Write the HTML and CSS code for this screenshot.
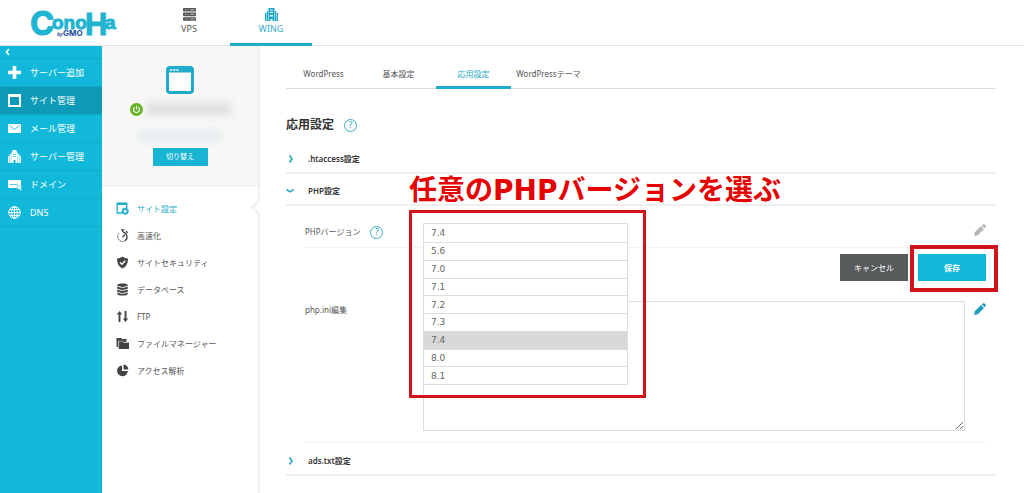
FILE: index.html
```html
<!DOCTYPE html>
<html lang="ja">
<head>
<meta charset="utf-8">
<meta name="viewport" content="width=device-width, initial-scale=1">
<title>ConoHa WING - 応用設定</title>
<link rel="stylesheet" href="styles.css">
</head>
<body>
<header class="header">
  <a class="logo" href="#" aria-label="ConoHa by GMO">
    <svg width="92" height="45" viewBox="0 0 92 45">
      <g class="logo-main">
        <text class="logo-c" x="0" y="35">C</text>
        <text class="logo-s" x="22" y="29">ono</text>
        <text class="logo-h" x="55" y="35">H</text>
        <text class="logo-s" x="75" y="29">a</text>
      </g>
      <text class="logo-by" x="27" y="36">by</text>
      <text class="logo-gmo" x="33" y="36">GMO</text>
    </svg>
  </a>
  <nav class="products">
    <a class="product" href="#">
      <svg width="13" height="13" viewBox="0 0 13 13"><g fill="#555"><rect x="0" y="0" width="13" height="3.6" rx=".8"/><rect x="0" y="4.6" width="13" height="3.6" rx=".8"/><rect x="0" y="9.2" width="13" height="3.6" rx=".8"/></g><path d="M2 1.8h1m1.500 0h1m2 0h4M2 6.400h1m1.500 0h1m2 0h4M2 11h1m1.500 0h1m2 0h4" stroke="#ccc" stroke-width=".9"/></svg>
      <span>VPS</span>
    </a>
    <a class="product is-active" href="#">
      <svg width="13" height="13" viewBox="0 0 13 13"><path fill="#1fa9c9" d="M3.500 0h6v13h-6zM1.800 3h1.200v10H1.800zM10 3h1.200v10H10zM0 5h1.300v8H0zM11.700 5H13v8h-1.300z"/><path d="M5 2.200h3M5 4.400h3" stroke="#fff" stroke-width=".9"/><path d="M5 7h3v1.500H5zM5.500 11h2v2h-2z" fill="#fff"/></svg>
      <span>WING</span>
    </a>
  </nav>
</header>
<div class="layout">
  <nav class="sidebar">
    <button class="collapse" type="button" aria-label="閉じる"><svg width="5" height="8" viewBox="0 0 5 8"><path d="M4 1 1.500 4 4 7" fill="none" stroke="#fff" stroke-width="1.600"/></svg></button>
    <a class="side-item" href="#"><svg width="13" height="13" viewBox="0 0 13 13"><path d="M6.500 0v13M0 6.500h13" stroke="#fff" stroke-width="3.600"/></svg>サーバー追加</a>
    <a class="side-item is-active" href="#"><svg width="13" height="13" viewBox="0 0 13 13"><path d="M1 1h11v11H1z" fill="none" stroke="#fff" stroke-width="2"/><path d="M0 0h13v3H0z" fill="#fff"/></svg>サイト管理</a>
    <a class="side-item" href="#"><svg width="13" height="13" viewBox="0 0 13 13"><rect y="2" width="13" height="9" rx="1" fill="#fff"/><path d="m1.500 3.500 5 4 5-4" fill="none" stroke="#12b8d9" stroke-width=".9"/></svg>メール管理</a>
    <a class="side-item" href="#"><svg width="13" height="13" viewBox="0 0 13 13"><path fill="#fff" d="M3.300 3 5 0h3l1.700 3v10H3.300zM1.600 4h1.300v9H1.600zM10.100 4h1.300v9h-1.300zM0 6h1.200v7H0zM11.800 6H13v7h-1.200z"/><path d="M5 4.500h3M5 6.500h3" stroke="#12b8d9" stroke-width=".7"/><path d="M5.500 10h2v3h-2z" fill="#12b8d9"/></svg>サーバー管理</a>
    <a class="side-item" href="#"><svg class="wide-icon" width="15" height="13" viewBox="0 0 15 13"><rect y="2" width="13" height="8" rx="1" fill="#fff"/><path d="M2 6.500h7" stroke="#12b8d9" stroke-width="1" stroke-dasharray="1.500 .6"/><path d="m9 7 5.500 2-2 1 1.500 2-1.300.8-1.500-2L10 12z" fill="#fff" stroke="#12b8d9" stroke-width=".4"/></svg>ドメイン</a>
    <a class="side-item" href="#"><svg width="13" height="13" viewBox="0 0 13 13"><g fill="none" stroke="#fff" stroke-width="1"><circle cx="6.500" cy="6.500" r="5.800"/><ellipse cx="6.500" cy="6.500" rx="2.800" ry="5.800"/><path d="M6.500.7v11.600M.7 6.500h11.600M1.500 3.600h10M1.500 9.400h10"/></g></svg>DNS</a>
  </nav>
  <aside class="site">
    <div class="summary">
      <svg class="site-icon" width="28" height="28" viewBox="0 0 28 28"><rect x="1.500" y="1.500" width="25" height="25" rx="2.500" fill="#fff" stroke="#1fabca" stroke-width="3"/><path d="M2 2h24v4.500H2z" fill="#1fabca"/><path d="M4 4h2.200m1 0h2.200m1 0h2.200" stroke="#fff" stroke-width="1.600"/></svg>
      <div class="site-name">
        <svg width="13" height="13" viewBox="0 0 13 13"><circle cx="6.500" cy="6.500" r="6.500" fill="#62b31c"/><path d="M4.500 4.300a3 3 0 1 0 4 0M6.500 2.800v3.700" fill="none" stroke="#fff" stroke-width="1.200"/></svg>
        <span class="masked"></span>
      </div>
      <span class="masked masked-link"></span>
      <button class="switch" type="button">切り替え</button>
    </div>
    <nav class="menu">
      <a class="menu-item is-active" href="#"><svg width="13" height="13" viewBox="0 0 13 13"><path d="M6 11H1.200V1.200h9.600V6" fill="none" stroke="#1fabca" stroke-width="1.300"/><path d="M1 1h10v2H1z" fill="#1fabca"/><circle cx="9.200" cy="9.200" r="2.400" fill="#fff" stroke="#1fabca" stroke-width="1.800"/><path d="M9.200 5.500v1M9.200 12v1M5.500 9.200h1M12 9.200h1M6.600 6.600l.7.700M11.200 11.200l.7.700M11.800 6.600l-.7.700M6.600 11.800l.7-.7" stroke="#1fabca"/></svg>サイト設定</a>
      <a class="menu-item" href="#"><svg width="13" height="13" viewBox="0 0 13 13"><g fill="none" stroke="#444"><path d="M3 4.200A4.800 4.800 0 0 0 1.800 8" stroke-dasharray="1 .8"/><path d="M1.800 8A4.800 4.800 0 0 0 9 11.800" stroke-dasharray="1.500 .6"/><path d="M9 11.800A4.800 4.800 0 0 0 7 3.100" stroke-width="1.200"/><path d="M5 .8h3.500M6.700 1v2M10.200 2.300l1.500 1.500" stroke-width="1.300"/><path d="M6.500 8 9 5.500" stroke-width="1.500"/></g></svg>高速化</a>
      <a class="menu-item" href="#"><svg width="13" height="13" viewBox="0 0 13 13"><path d="M6.500.5Q9 2.400 12 2.400 12.200 9.500 6.500 12.500.8 9.500 1 2.400 4 2.400 6.500.5z" fill="#444"/><path d="m4 6.200 2 2L9.300 4.700" fill="none" stroke="#fff" stroke-width="1.300"/></svg>サイトセキュリティ</a>
      <a class="menu-item" href="#"><svg width="13" height="13" viewBox="0 0 13 13"><path d="M1.200 2.300C1.200-.2 11.800-.2 11.800 2.300v8.400c0 2.500-10.600 2.500-10.600 0z" fill="#444"/><path d="M1 3.200q5.500 2.700 11 0M1 6.200q5.500 2.700 11 0M1 9.200q5.500 2.700 11 0" fill="none" stroke="#fff" stroke-width=".9"/></svg>データベース</a>
      <a class="menu-item" href="#"><svg width="13" height="13" viewBox="0 0 13 13"><path d="M3.500 12V3M9.500 1v9" stroke="#444" stroke-width="1.900"/><path d="M.8 4.500 3.500 1l2.700 3.500zM6.800 8.500h5.400L9.500 12z" fill="#444"/></svg>FTP</a>
      <a class="menu-item" href="#"><svg width="13" height="13" viewBox="0 0 13 13"><path d="M.5 1H5l1 1h4.500v3H2.500v5H.5z" fill="#444"/><path d="M2.700 4.500h4l1 1H13V12H2.700z" fill="#444"/><path d="M2.500 9.500V4.200h4.600l1 1h4" fill="none" stroke="#fff" stroke-width=".5"/></svg>ファイルマネージャー</a>
      <a class="menu-item" href="#"><svg width="13" height="13" viewBox="0 0 13 13"><path d="M6 1.500V7h5.800A5.400 5.400 0 1 1 6 1.500z" fill="#444"/><path d="M7.500.5a5 5 0 0 1 4.800 5H7.500z" fill="#444"/></svg>アクセス解析</a>
    </nav>
  </aside>
  <main class="main">
    <nav class="tabs">
      <a class="tab" href="#">WordPress</a>
      <a class="tab" href="#">基本設定</a>
      <a class="tab is-active" href="#">応用設定</a>
      <a class="tab" href="#">WordPressテーマ</a>
    </nav>
    <h1 class="title">応用設定 <button class="help" type="button" aria-label="ヘルプ">?</button></h1>
    <button class="section" type="button"><svg width="8" height="8" viewBox="0 0 8 8"><path d="M3.500.5 6 4 3.500 7.500" fill="none" stroke="#27a8c2" stroke-width="1.600"/></svg>.htaccess設定</button>
    <button class="section" type="button" aria-expanded="true"><svg width="8" height="8" viewBox="0 0 8 8"><path d="M.5 2.500 4 4.800 7.500 2.500" fill="none" stroke="#27a8c2" stroke-width="1.600"/></svg>PHP設定</button>
    <div class="panel">
      <div class="row row-version">
        <div class="label"><label for="version">PHPバージョン</label><button class="help" type="button" aria-label="PHPバージョンのヘルプ">?</button></div>
        <div class="field">
          <p class="callout">任意のPHPバージョンを選ぶ</p>
          <select class="version" id="version"><option>7.4</option></select>
          <ul class="options">
            <li><button type="button">5.6</button></li>
            <li><button type="button">7.0</button></li>
            <li><button type="button">7.1</button></li>
            <li><button type="button">7.2</button></li>
            <li><button type="button">7.3</button></li>
            <li><button type="button" class="is-selected">7.4</button></li>
            <li><button type="button">8.0</button></li>
            <li><button type="button">8.1</button></li>
          </ul>
          <div class="mark mark-list"></div>
        </div>
        <button class="edit is-off" type="button" aria-label="編集"><svg width="12" height="12" viewBox="0 0 12 12"><path d="m0 12 .8-3.800L7 2l3 3-6.200 6.200zM7.700 1.400 9 .4q.8-.6 1.500 0l1.100 1.100q.6.700 0 1.500l-1 1.300z"/></svg></button>
      </div>
      <div class="actions">
        <button class="btn btn-cancel" type="button">キャンセル</button>
        <span class="save-wrap"><button class="btn btn-save" type="button">保存</button><span class="mark mark-save"></span></span>
      </div>
      <div class="row row-ini">
        <div class="label"><label for="ini">php.ini編集</label></div>
        <div class="field"><textarea class="ini" id="ini"></textarea></div>
        <button class="edit" type="button" aria-label="編集"><svg width="12" height="12" viewBox="0 0 12 12"><path d="m0 12 .8-3.800L7 2l3 3-6.200 6.200zM7.700 1.400 9 .4q.8-.6 1.500 0l1.100 1.100q.6.700 0 1.500l-1 1.300z"/></svg></button>
      </div>
    </div>
    <button class="section" type="button"><svg width="8" height="8" viewBox="0 0 8 8"><path d="M3.500.5 6 4 3.500 7.500" fill="none" stroke="#27a8c2" stroke-width="1.600"/></svg>ads.txt設定</button>
  </main>
</div>
</body>
</html>
```
FILE: styles.css
```css
* { box-sizing: border-box; }
body {
  margin: 0;
  min-height: 100vh;
  display: flex;
  flex-direction: column;
  background: #fff;
  color: #555;
  font: 8px/16px "Noto Sans", "Noto Sans CJK JP", sans-serif;
}
a { color: inherit; text-decoration: none; }
button { font: inherit; color: inherit; border: 0; background: none; padding: 0; margin: 0; }
svg { flex: none; display: block; }

.header { display: flex; height: 46px; border-bottom: 1px solid #e4e4e4; }
.logo { width: 148px; padding-left: 30px; }
.logo-main { fill: #1fb4d2; stroke: #1fb4d2; }
.logo-c { font: 700 33px Inter, sans-serif; }
.logo-s { font: 700 19px "Liberation Sans", sans-serif; }
.logo-h { font: 700 31px "Liberation Sans", sans-serif; }
.logo-by { font: italic 700 5px "Liberation Sans", sans-serif; fill: #1c4fa0; }
.logo-gmo { font: 700 8px Inter, sans-serif; fill: #1c4fa0; }
.products { display: flex; font-size: 9px; }
.product {
  width: 82px;
  height: 46px;
  padding-top: 8px;
  display: flex;
  flex-direction: column;
  align-items: center;
  border-bottom: 3px solid transparent;
}
.product.is-active { color: #35a9c6; border-color: #1fabca; }

.layout { flex: 1; display: flex; }
.sidebar { width: 102px; flex: none; background: #12b8d9; color: #fff; font-size: 9px; }
.collapse { display: flex; align-items: center; width: 100%; height: 13px; padding-left: 5px; border-bottom: 1px solid #10abca; }
.side-item { display: flex; align-items: center; gap: 9px; height: 28px; padding-left: 8px; border-bottom: 1px solid #10abca; }
.wide-icon { margin-right: -2px; }
.side-item.is-active { background: #0c9ab7; }

.site { width: 158px; flex: none; border-right: 2px solid #f0f0f0; }
.summary {
  height: 140px;
  padding-top: 20px;
  display: flex;
  flex-direction: column;
  align-items: center;
  background: #f7f7f7;
  border-bottom: 1px solid #ececec;
}
.site-name { display: flex; align-items: center; gap: 4px; height: 30px; }
.masked { width: 84px; height: 12px; background: #ddd; filter: blur(4px); }
.masked-link { height: 8px; margin: 8px 0 8px; background: #dfeaec; }
.switch { width: 55px; height: 18px; background: #18b4d3; color: #fff; font-size: 7px; line-height: 16px; }
.menu { padding: 9px 0 0 14px; position: relative; }
.menu::after {
  content: "";
  position: absolute;
  top: 16px;
  right: -6px;
  width: 9px;
  height: 9px;
  background: #fff;
  border: solid #eee;
  border-width: 0 0 2px 2px;
  transform: rotate(45deg);
}
.menu-item { display: flex; align-items: center; gap: 8px; height: 27px; }
.menu-item.is-active { color: #1fabca; }

.main { flex: 1; min-width: 0; padding: 14px 28px 0 26px; }
.tabs { display: flex; height: 29px; border-bottom: 1px solid #ddd; }
.tab { width: 75px; height: 29px; text-align: center; line-height: 27px; border-bottom: 3px solid transparent; white-space: nowrap; }
.tab.is-active { color: #1fabca; border-color: #1fabca; }
.title { display: flex; align-items: center; gap: 10px; margin: 24px 0 5px; font-size: 12px; line-height: 24px; font-weight: 700; color: #333; }
.help { width: 13px; height: 13px; border: 1px solid #3caecb; border-radius: 50%; color: #2aa7c6; font-weight: 400; font-size: 9px; line-height: 10px; }
.section {
  display: flex;
  align-items: center;
  gap: 14px;
  width: 100%;
  height: 32px;
  padding-top: 4px;
  border-bottom: 2px solid #f0f0f0;
  color: #333;
  font-weight: 600;
}
.panel { padding: 0 10px 0 19px; }
.row { display: flex; align-items: flex-start; border-bottom: 1px dotted #e8e8e8; }
.row-version { height: 42px; padding-top: 17px; }
.row-ini { height: 142px; margin-top: 20px; margin-bottom: 1px; }
.label { width: 118px; flex: none; display: flex; align-items: center; gap: 10px; height: 18px; }
.field { position: relative; flex: 1; min-width: 0; }
.version {
  display: block;
  appearance: none;
  width: 205px;
  height: 20px;
  margin: 0;
  padding: 0 7px;
  border: 1px solid #ddd;
  border-radius: 0;
  background: #fff;
  color: #666;
  font: 9px/18px "DejaVu Sans", sans-serif;
}
.options {
  position: absolute;
  z-index: 2;
  top: 20px;
  left: 0;
  width: 205px;
  height: 142px;
  display: grid;
  grid-auto-rows: 1fr;
  margin: 0;
  padding: 0;
  list-style: none;
  border: solid #ddd;
  border-width: 0 1px;
  background: #fff;
}
.options button {
  display: block;
  width: 100%;
  height: 100%;
  padding: 0 7px;
  border-bottom: 1px solid #ddd;
  text-align: left;
  color: #666;
  font: 9px/16px "DejaVu Sans", sans-serif;
}
.options .is-selected { background: #d8d8d8; }
.callout {
  position: absolute;
  z-index: 3;
  left: -14px;
  bottom: 32px;
  margin: 0;
  white-space: nowrap;
  color: #e60000;
  font: 700 28px/40px "DejaVu Sans", "Noto Sans CJK JP", sans-serif;
}
.mark { position: absolute; z-index: 3; pointer-events: none; }
.mark-list { top: -13px; left: -14px; width: 237px; height: 188px; border: 3px solid #d2141a; }
.edit { width: 12px; margin: 2px 0 0 9px; fill: #1f9fbd; }
.row-version .edit { margin-top: 1px; }
.edit.is-off { fill: #b5b5b5; }
.actions { display: flex; justify-content: flex-end; gap: 10px; padding-top: 6px; }
.btn { display: block; width: 68px; height: 27px; color: #fff; }
.btn-cancel { background: #575b5c; }
.btn-save { background: #12b8d9; font-weight: 600; }
.save-wrap { position: relative; }
.mark-save { inset: -9px -12px -11px -8px; border: 4px solid #d2141a; }
.ini { display: block; width: 100%; height: 130px; margin: 0; border: 1px solid #ddd; background: #fff; }
```
